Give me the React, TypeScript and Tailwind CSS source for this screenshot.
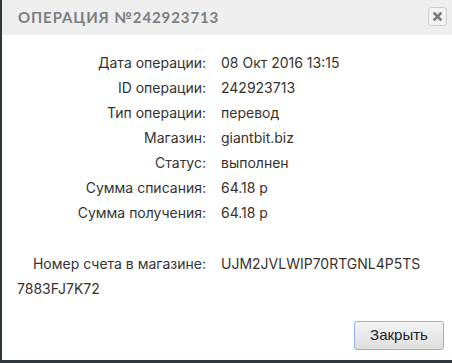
import React from "react";

const rows: [string, string][] = [
  ["Дата операции:", "08 Окт 2016 13:15"],
  ["ID операции:", "242923713"],
  ["Тип операции:", "перевод"],
  ["Магазин:", "giantbit.biz"],
  ["Статус:", "выполнен"],
  ["Сумма списания:", "64.18 р"],
  ["Сумма получения:", "64.18 р"],
];

export default function App() {
  return (
    <div className="w-[452px] h-[363px] bg-[#2f383d] pl-[2px] pb-[3px] flex">
      <div className="flex-1 bg-white flex flex-col">
        <div className="h-[35px] bg-[#eeeeee] flex items-center justify-between pl-[16px] pr-[5px]">
          <span
            className="text-[15px] font-bold tracking-[0.9px] text-[#7a7e82] leading-none"
            style={{ fontFamily: "Lato, 'Open Sans', sans-serif" }}
          >
            ОПЕРАЦИЯ №242923713
          </span>
          <div className="w-[19px] h-[19px] border border-[#cccccc] rounded-[3px] bg-[#f2f2f2] flex items-center justify-center mb-[3px]">
            <svg width="9" height="9" viewBox="0 0 9 9">
              <path d="M1.5 1.5 L7.5 7.5 M7.5 1.5 L1.5 7.5" stroke="#7a7a7a" strokeWidth="2.6" strokeLinecap="square" />
            </svg>
          </div>
        </div>
        <div
          className="flex flex-col px-[15px] pt-[15px] text-[14px] text-[#333]"
          style={{ fontFamily: "Inter, 'Open Sans', sans-serif" }}
        >
          {rows.map(([l, v]) => (
            <div key={l} className="flex h-[25px] items-center">
              <span className="w-[189px] text-right">{l}</span>
              <span className="ml-[15px] text-[#38322c]">{v}</span>
            </div>
          ))}
          <div className="mt-[26px] leading-[25px]">
            <span className="inline-block w-[189px] text-right">Номер счета в магазине:</span>
            <span className="ml-[15px] text-[#38322c]">
              UJM2JVLWIP70RTGNL4P5TS
              <br />
              7883FJ7K72
            </span>
          </div>
        </div>
        <div className="flex-1" />
        <div className="flex justify-end pb-[10px] pr-[8px]">
          <button
            className="w-[90px] h-[29px] rounded-[3px] border border-[#8fb0e6] bg-gradient-to-b from-[#f4f4f4] to-[#dedede] text-[15px] text-[#222]"
            style={{ fontFamily: "'Liberation Sans', Arial, sans-serif" }}
          >
            Закрыть
          </button>
        </div>
      </div>
    </div>
  );
}
